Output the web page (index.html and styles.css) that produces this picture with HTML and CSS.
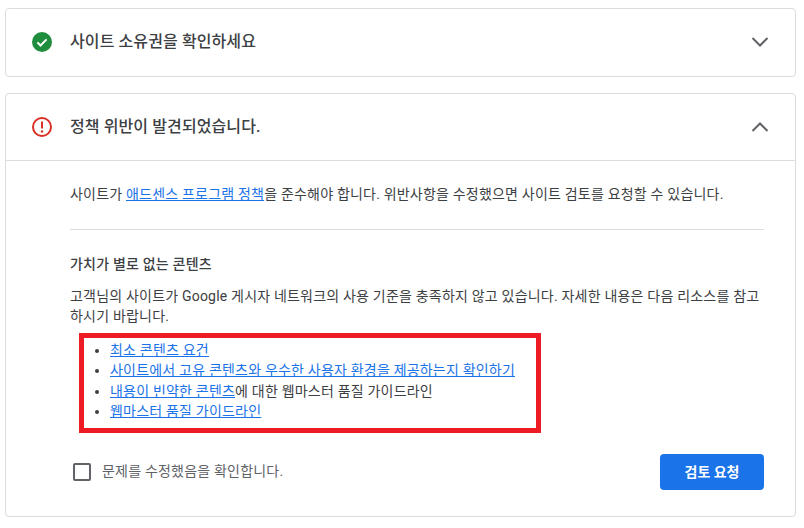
FILE: index.html
```html
<!DOCTYPE html>
<html lang="ko">
<head>
<meta charset="utf-8">
<title>사이트 검토</title>
<link rel="stylesheet" href="styles.css">
</head>
<body>
<section class="card card-collapsed">
  <header class="card-head">
    <svg class="status" viewBox="0 0 24 24"><circle cx="12" cy="12" r="10" fill="#1e8e3e"/><path d="M7.4 12.4l3.1 3.1 6.1-6.1" fill="none" stroke="#fff" stroke-width="2"/></svg>
    <h2 class="card-title">사이트 소유권을 확인하세요</h2>
    <svg class="chevron" viewBox="0 0 24 24"><path d="M4.5 8l7.5 7.5L19.5 8" fill="none" stroke="#5f6368" stroke-width="2"/></svg>
  </header>
</section>
<section class="card card-open">
  <header class="card-head card-head-ruled">
    <svg class="status" viewBox="0 0 24 24"><circle cx="12" cy="12" r="9" fill="none" stroke="#d93025" stroke-width="2"/><path d="M12 6.5v7" stroke="#d93025" stroke-width="2"/><circle cx="12" cy="16.5" r="1.2" fill="#d93025"/></svg>
    <h2 class="card-title">정책 위반이 발견되었습니다.</h2>
    <svg class="chevron" viewBox="0 0 24 24"><path d="M4.5 16L12 8.5 19.5 16" fill="none" stroke="#5f6368" stroke-width="2"/></svg>
  </header>
  <div class="card-body">
    <p class="intro">사이트가 <a href="#">애드센스 프로그램 정책</a>을 준수해야 합니다. 위반사항을 수정했으면 사이트 검토를 요청할 수 있습니다.</p>
    <div class="violation">
      <h3 class="violation-title">가치가 별로 없는 콘텐츠</h3>
      <p class="violation-text">고객님의 사이트가 Google 게시자 네트워크의 사용 기준을 충족하지 않고 있습니다. 자세한 내용은 다음 리소스를 참고하시기 바랍니다.</p>
      <ul class="resources">
        <li><a href="#">최소 콘텐츠 요건</a></li>
        <li><a href="#">사이트에서 고유 콘텐츠와 우수한 사용자 환경을 제공하는지 확인하기</a></li>
        <li><a href="#">내용이 빈약한 콘텐츠</a>에 대한 웹마스터 품질 가이드라인</li>
        <li><a href="#">웹마스터 품질 가이드라인</a></li>
      </ul>
    </div>
    <div class="actions">
      <label class="confirm"><span class="box"></span><span class="confirm-text">문제를 수정했음을 확인합니다.</span></label>
      <button class="review" type="button">검토 요청</button>
    </div>
  </div>
</section>
</body>
</html>
```
FILE: styles.css
```css
* { box-sizing: border-box; }
html, body { height: 100%; }
body {
  margin: 0;
  padding: 8px 8px 0 5px;
  background: #fff;
  font-family: Roboto, "Noto Sans CJK KR", sans-serif;
  font-size: 14px;
  line-height: 20px;
  letter-spacing: 0.2px;
  color: #3c4043;
  overflow: hidden;
}
a { color: #1a73e8; text-decoration: underline; }
.card {
  border: 1px solid #dadce0;
  border-radius: 4px;
  background: #fff;
}
.card-collapsed { height: 69px; margin-bottom: 16px; }
.card-open { height: 424px; }
.card-head {
  display: flex;
  align-items: center;
  height: 67px;
  padding: 0 23px 2px 24px;
}
.card-head-ruled { padding-bottom: 0; border-bottom: 1px solid #dadce0; }
.status { width: 24px; height: 24px; flex: none; }
.card-title {
  flex: 1;
  margin: 0 0 0 16px;
  font-size: 16px;
  line-height: 24px;
  font-weight: 500;
  letter-spacing: 0.1px;
  color: #3c4043;
}
.chevron { width: 24px; height: 24px; flex: none; }
.card-body { padding: 23px 31px 0 64px; }
.intro {
  margin: 0;
  padding-bottom: 25px;
  border-bottom: 1px solid #dadce0;
}
.violation { padding-top: 24px; }
.violation-title {
  margin: 0 0 12px;
  font-size: 14px;
  line-height: 20px;
  font-weight: 500;
  color: #3c4043;
}
.violation-text { margin: 0 0 7px; }
.resources {
  width: 462px;
  height: 100px;
  margin: 0 0 0 9px;
  padding: 2px 0 0 26px;
  border: 5px solid #ed1c24;
  line-height: 20.4px;
  list-style: disc;
}
.actions {
  display: flex;
  align-items: center;
  justify-content: space-between;
  margin-top: 21px;
  padding-left: 3px;
}
.confirm { display: flex; align-items: center; gap: 11px; color: #5f6368; }
.confirm-text { margin-top: -2px; }
.box {
  width: 18px;
  height: 18px;
  border: 2px solid #5f6368;
  border-radius: 2px;
}
.review {
  width: 104px;
  height: 36px;
  border: 0;
  border-radius: 4px;
  background: #1a73e8;
  color: #fff;
  font: 700 14px/20px Roboto, "Noto Sans CJK KR", sans-serif;
}
```
